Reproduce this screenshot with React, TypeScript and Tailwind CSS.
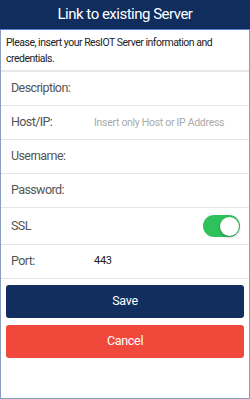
import React from "react";

const font = { fontFamily: "Roboto, 'Liberation Sans', sans-serif" };

function Row({ label, children, tall }: { label: string; children?: React.ReactNode; tall?: boolean }) {
  return (
    <div className={`flex items-center border-b border-[#e6e6e6] ${tall ? "h-[37px]" : "h-[34px]"}`}>
      <div className="w-[93px] pl-[10px] text-[12.5px] tracking-[-0.6px] text-[#555555]">{label}</div>
      <div className="flex-1 flex items-center pr-[8px]">{children}</div>
    </div>
  );
}

export default function App() {
  return (
    <div className="w-[250px] h-[399px] bg-white flex flex-col" style={font}>
      <div className="h-[29px] bg-[#102d5e] flex items-center justify-center text-white text-[15px] tracking-[-0.5px] shrink-0">
        Link to existing Server
      </div>
      <div className="h-[1px] bg-[#5b7fd1] shrink-0" />
      <div className="flex-1 flex flex-col border-x border-b border-[#8a9cc0]">
        <div className="h-[42px] border-b-2 border-[#e8e8e8] px-[5px] pt-[5px] text-[10.5px] tracking-[-0.5px] leading-[16px] text-[#222222]">
          Please, insert your ResIOT Server information and credentials.
        </div>
        <Row label="Description:" />
        <Row label="Host/IP:">
          <span className="text-[10.5px] tracking-[-0.3px] text-[#aaaaaa]">Insert only Host or IP Address</span>
        </Row>
        <Row label="Username:" />
        <Row label="Password:" />
        <Row label="SSL" tall>
          <div className="ml-auto w-[37px] h-[22px] rounded-full bg-[#2fc25c] relative mr-[1px]">
            <div className="absolute right-[1.5px] top-[1.5px] w-[19px] h-[19px] rounded-full bg-white shadow-[0_1px_3px_rgba(0,0,0,0.35)]" />
          </div>
        </Row>
        <Row label="Port:">
          <span className="text-[11px] tracking-[-0.3px] text-[#222222]">443</span>
        </Row>
        <div className="px-[5px] pt-[6px] flex flex-col gap-[7px]">
          <div className="h-[33px] rounded-[3px] bg-[#112e5e] flex items-center justify-center text-white text-[12.5px] tracking-[-0.3px]">
            Save
          </div>
          <div className="h-[33px] rounded-[3px] bg-[#f0483b] flex items-center justify-center text-white text-[12.5px] tracking-[-0.3px]">
            Cancel
          </div>
        </div>
      </div>
    </div>
  );
}
